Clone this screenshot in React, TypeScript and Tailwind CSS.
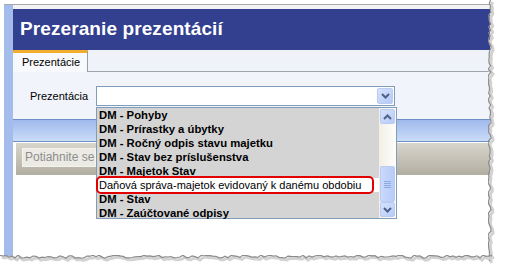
import React from "react";

const items = [
  { label: "DM - Pohyby", bold: true },
  { label: "DM - Prírastky a úbytky", bold: true },
  { label: "DM - Ročný odpis stavu majetku", bold: true },
  { label: "DM - Stav bez príslušenstva", bold: true },
  { label: "DM - Majetok Stav", bold: true },
  { label: "Daňová správa-majetok evidovaný k danému obdobiu", bold: false },
  { label: "DM - Stav", bold: true },
  { label: "DM - Zaúčtované odpisy", bold: true },
];

// pseudo-random offsets for the torn paper edge
function tornPoints(length: number, step: number, seed: number, vertical: boolean) {
  const pts: string[] = [];
  for (let i = 0; i <= length; i += step) {
    const off = (Math.sin(i * 12.9898 + seed) * 43758.5453) % 1;
    const d = Math.abs(off) * 3.2;
    pts.push(vertical ? `${d.toFixed(1)},${i}` : `${i},${d.toFixed(1)}`);
  }
  return pts.join(" ");
}

function Chevron({ up = false }: { up?: boolean }) {
  return (
    <svg width="9" height="6" viewBox="0 0 9 6">
      <path
        d={up ? "M1 5 L4.5 1.5 L8 5" : "M1 1 L4.5 4.5 L8 1"}
        fill="none"
        stroke="#4d6185"
        strokeWidth="2"
      />
    </svg>
  );
}

function ScrollButton({ up = false }: { up?: boolean }) {
  return (
    <div className="flex h-[15px] w-[15px] items-center justify-center rounded-[2px] border border-[#b9cbf3] bg-gradient-to-br from-[#d6e2fd] to-[#b7cbf8]">
      <Chevron up={up} />
    </div>
  );
}

export default function App() {
  return (
    <div className="relative h-[271px] w-[505px] overflow-hidden bg-white font-['Liberation_Sans',Arial,sans-serif]">
      <div className="ml-[4px] mt-[4px] flex h-[253px] w-[486px] flex-col border-t border-[#a9a9a9]">
        <div className="flex flex-1">
          {/* left desktop strip */}
          <div className="w-[9px] bg-[#a4bcec]" />

          <div className="flex flex-1 flex-col">
            <div className="h-[4px] bg-[#f3f3f3]" />

            {/* header */}
            <div className="flex h-[41px] items-center bg-[#333f8f] pb-[1px] pl-[7px]">
              <h1 className="text-[19px] font-bold tracking-[0.1px] text-white">
                Prezeranie prezentácií
              </h1>
            </div>

            {/* tab strip */}
            <div className="flex h-[22px] bg-[#eff3f9]">
              <div className="flex h-[23px] w-[75px] items-center border-r border-t-[3px] border-r-[#969fa8] border-t-[#f3ad2e] bg-[#f8f9fc] pb-[2px] pl-[9px] text-[11px] text-black">
                Prezentácie
              </div>
              <div className="flex-1 border-b border-[#9ca3ab]" />
            </div>

            {/* form area */}
            <div className="flex h-[47px] items-start bg-[#f1f4fa] pl-[17px] pt-[14px]">
              <label className="flex h-[20px] w-[66px] items-center text-[11px] text-black">
                Prezentácia
              </label>
              <div className="flex h-[20px] w-[299px] items-center justify-end border border-[#7f9db9] bg-white pr-[1px]">
                <div className="flex h-[16px] w-[16px] items-center justify-center rounded-[2px] border border-[#b9cbf3] bg-gradient-to-br from-[#d6e2fd] to-[#b5c9f7]">
                  <Chevron />
                </div>
              </div>
            </div>

            {/* blue group bar */}
            <div className="h-[23px] border-y border-[#6e8fc6] bg-gradient-to-b from-[#a0b9ec] to-[#cadcf8]" />

            {/* group-by panel */}
            <div className="ml-[2px] h-[33px] border-l border-t border-white bg-gradient-to-b from-[#d8d5cc] to-[#b2aea2] pl-[6px] pt-[5px]">
              <div className="h-[19px] w-[74px] overflow-hidden whitespace-nowrap border border-[#f4f3ee] bg-[#ebeae4] pl-[2px] text-[12px] leading-[17px] text-[#8d8d8d]">
                Potiahnite se
              </div>
            </div>

            <div className="flex-1 bg-white" />
          </div>
        </div>
      </div>

      {/* open dropdown list */}
      <div className="absolute left-[96px] top-[107px] flex h-[112px] w-[301px] border border-[#7f9db9] bg-[#d4d4d4]">
        <div className="flex flex-1 flex-col">
          {items.map((it) => (
            <div
              key={it.label}
              className={
                it.bold
                  ? "h-[14px] whitespace-nowrap pl-[2px] text-[11.3px] font-bold leading-[14px] text-black"
                  : "h-[14px] whitespace-nowrap bg-white pl-[2px] text-[11px] leading-[14px] text-black"
              }
            >
              {it.label}
            </div>
          ))}
        </div>
        <div className="flex w-[17px] flex-col items-center bg-gradient-to-r from-[#f1efe6] to-[#fdfdfb] py-[1px]">
          <ScrollButton up />
          <div className="flex w-full flex-1 flex-col items-center justify-end">
            <div className="flex h-[36px] w-[15px] flex-col items-center justify-center gap-[1px] rounded-[2px] border border-[#b9cbf3] bg-gradient-to-r from-[#cad9fc] to-[#b8cbf8]">
              <div className="h-px w-[7px] bg-[#8ea8e6]" />
              <div className="h-px w-[7px] bg-[#8ea8e6]" />
              <div className="h-px w-[7px] bg-[#8ea8e6]" />
              <div className="h-px w-[7px] bg-[#8ea8e6]" />
            </div>
          </div>
          <ScrollButton />
        </div>
      </div>

      {/* red annotation around the selected item */}
      <div className="absolute left-[96px] top-[176px] h-[18px] w-[278px] rounded-[5px] border-2 border-[#e30000]" />

      {/* torn paper edges */}
      <svg className="absolute left-[488px] top-0" width="10" height="265">
        <polyline points={tornPoints(262, 3, 1.7, true)} fill="none" stroke="#d2d2d2" strokeWidth="3" transform="translate(2,2)" />
        <polyline points={tornPoints(262, 3, 1.7, true)} fill="none" stroke="#8c8c8c" strokeWidth="1.2" />
      </svg>
      <svg className="absolute left-0 top-[255px]" width="495" height="10">
        <polyline points={tornPoints(492, 3, 4.3, false)} fill="none" stroke="#d2d2d2" strokeWidth="3" transform="translate(2,2)" />
        <polyline points={tornPoints(492, 3, 4.3, false)} fill="none" stroke="#8c8c8c" strokeWidth="1.2" />
      </svg>
    </div>
  );
}
